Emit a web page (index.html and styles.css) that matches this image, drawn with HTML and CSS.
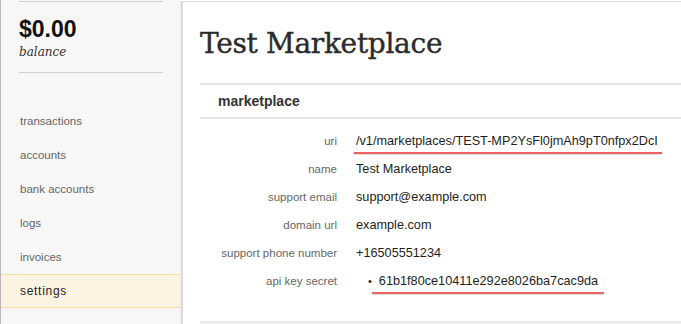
FILE: index.html
```html
<!DOCTYPE html>
<html lang="en">
<head>
  <meta charset="UTF-8">
  <title>Test Marketplace</title>
  <link rel="stylesheet" href="styles.css">
</head>
<body>
  <div class="page">
    <div class="sidebar">
      <div class="balance">
        <div class="amount">$0.00</div>
        <div class="label">balance</div>
      </div>
      <ul class="nav">
        <li>transactions</li>
        <li>accounts</li>
        <li>bank accounts</li>
        <li>logs</li>
        <li>invoices</li>
        <li class="active">settings</li>
      </ul>
    </div>

    <div class="main">
      <h1>Test Marketplace</h1>
      <div class="section">
        <h2>marketplace</h2>
        <table class="details">
          <tr><th>uri</th><td><span class="mark">/v1/marketplaces/TEST-MP2YsFl0jmAh9pT0nfpx2DcI</span></td></tr>
          <tr><th>name</th><td>Test Marketplace</td></tr>
          <tr><th>support email</th><td>support@example.com</td></tr>
          <tr><th>domain url</th><td>example.com</td></tr>
          <tr><th>support phone number</th><td>+16505551234</td></tr>
          <tr><th>api key secret</th><td><span class="bullet">&bull;</span><span class="mark key">61b1f80ce10411e292e8026ba7cac9da</span></td></tr>
        </table>
      </div>
      <div class="footer-bar"></div>
    </div>
  </div>
</body>
</html>
```

FILE: styles.css
```css
body {
  margin: 0;
  font-family: "Liberation Sans", Arial, sans-serif;
  background: #fff;
  color: #222;
}

.page {
  display: flex;
  height: 324px;
  overflow: hidden;
}

.sidebar {
  width: 180px;
  flex-shrink: 0;
  background: #f7f7f7;
  border-left: 1px solid #b8b8b8;
}

.balance {
  margin: 1px 18px 0 18px;
  border-top: 1px solid #cfcfcf;
  border-bottom: 1px solid #cfcfcf;
  height: 72px;
  box-sizing: border-box;
  padding-top: 13px;
}

.balance .amount {
  font-weight: bold;
  font-size: 23px;
  line-height: 28px;
  color: #111;
}

.balance .label {
  font-family: "DejaVu Serif", "Liberation Serif", serif;
  font-style: italic;
  font-size: 12px;
  line-height: 18px;
  color: #333;
}

.nav {
  list-style: none;
  margin: 31px 0 0 0;
  padding: 0;
}

.nav li {
  height: 34px;
  line-height: 34px;
  padding-left: 19px;
  font-size: 11.5px;
  color: #666;
  box-sizing: border-box;
}

.nav li.active {
  background: #fcf3e2;
  border-top: 1px solid #f6dc9e;
  border-bottom: 1px solid #f6dc9e;
  line-height: 32px;
  color: #222;
  letter-spacing: 0.7px;
  font-size: 12px;
}

.main {
  flex: 1;
  margin-top: 1px;
  border-top: 1px solid #dedede;
  border-left: 2px solid #dcdcdc;
  box-shadow: -1px 0 0 #ececec;
  padding-left: 17px;
  display: flex;
  flex-direction: column;
}

.main h1 {
  font-family: "DejaVu Serif", "Liberation Serif", serif;
  font-weight: normal;
  font-size: 28px;
  letter-spacing: -0.3px;
  color: #2b2b2b;
  -webkit-text-stroke: 0.4px #2b2b2b;
  margin: 0;
  padding-top: 22px;
  height: 59px;
  line-height: 40px;
}

.section {
  border-top: 2px solid #e6e6e6;
}

.section h2 {
  margin: 0;
  font-size: 14px;
  font-weight: bold;
  color: #333;
  height: 32px;
  line-height: 32px;
  padding-left: 18px;
  border-bottom: 2px solid #e6e6e6;
}

.details {
  border-collapse: collapse;
  margin-top: 8px;
}

.details th {
  width: 137px;
  text-align: right;
  font-weight: normal;
  font-size: 11.5px;
  color: #666;
  height: 28px;
  padding: 0;
}

.details td {
  padding: 0 0 0 19px;
  font-size: 12.7px;
  color: #1e1e1e;
  height: 28px;
}

.mark {
  padding: 0 4px 4px 2px;
  margin-left: -2px;
  border-bottom: 2px solid #f0625f;
  box-shadow: 0 1px 1px rgba(0, 0, 0, 0.12);
}

.bullet {
  display: inline-block;
  margin-left: 12px;
  font-size: 11px;
}

.mark.key {
  padding-left: 7px;
  padding-right: 6px;
  margin-left: 0;
}

.footer-bar {
  margin-top: auto;
  border-top: 3px solid #ececec;
}
```
